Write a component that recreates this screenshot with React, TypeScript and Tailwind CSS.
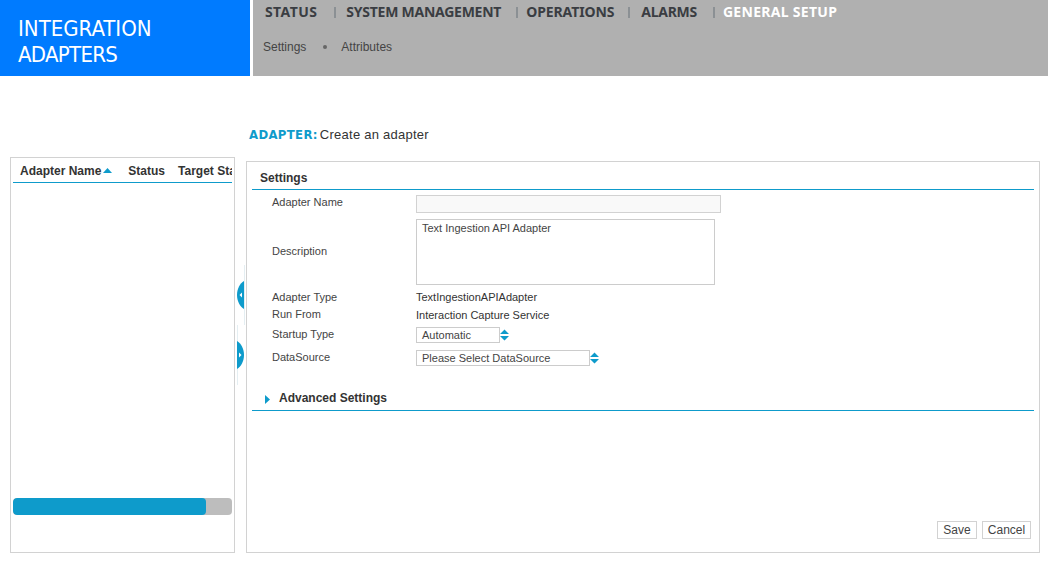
import React from "react";

const teal = "#0e9bcb";

function Spinner() {
  return (
    <svg width="9" height="12" viewBox="0 0 9 12" className="shrink-0">
      <path d="M4.5 0.5 L9 5 H0 Z M0 7 H9 L4.5 11.5 Z" fill="#0e9bcb" />
    </svg>
  );
}

function Handle({ dir, className }: { dir: "l" | "r"; className: string }) {
  return (
    <div className={`absolute w-[8px] flex ${className}`}>
      <svg width="8" height="28" viewBox="0 0 8 28">
        <path
          d={dir === "l" ? "M7 0 C 3 2 0 8 0 14 C 0 20 3 26 7 28 Z" : "M1 0 C 5 2 8 8 8 14 C 8 20 5 26 1 28 Z"}
          fill="#0e9bcb"
        />
        <path d={dir === "l" ? "M5 11.5 L2.5 14 L5 16.5 Z" : "M3 11.5 L5.5 14 L3 16.5 Z"} fill="#ffffff" />
      </svg>
    </div>
  );
}

function Row({ label, h, children, className = "", labelClass = "" }: { label: string; h: string; children?: React.ReactNode; className?: string; labelClass?: string }) {
  return (
    <div className={`flex items-center ${h} ${className}`}>
      <div className={`w-[164px] shrink-0 pl-[20px] ${labelClass}`}>{label}</div>
      {children}
    </div>
  );
}

export default function App() {
  const nav = [
    { t: "STATUS", cls: "ml-[12px] text-[#3a3d42] tracking-[0.4px]", sep: "" },
    { t: "SYSTEM MANAGEMENT", cls: "text-[#3a3d42] tracking-[-0.25px]", sep: "ml-[17px] mr-[10px]" },
    { t: "OPERATIONS", cls: "text-[#3a3d42] tracking-[-0.1px]", sep: "ml-[15px] mr-[8px]" },
    { t: "ALARMS", cls: "text-[#3a3d42] tracking-[-0.3px]", sep: "ml-[14px] mr-[11px]" },
    { t: "GENERAL SETUP", cls: "text-white tracking-[0.3px]", sep: "ml-[16px] mr-[8px]" },
  ];
  return (
    <div className="w-[1048px] h-[562px] bg-white overflow-hidden relative text-[11px] text-[#444444] font-['Liberation_Sans',Arial,sans-serif]">
      <header className="flex h-[76px]">
        <div className="w-[250px] bg-[#007bff] text-white text-[22px] leading-[26px] pl-[18px] pt-[16px] font-['DejaVu_Sans_Condensed','DejaVu_Sans',sans-serif]">
          <div>INTEGRATION</div>
          <div className="tracking-[-0.7px]">ADAPTERS</div>
        </div>
        <div className="ml-[3px] flex-1 bg-[#b0b0b0]">
          <nav className="flex items-center h-[23px] text-[14px] font-bold font-['Noto_Sans',sans-serif]">
            {nav.map((n) => (
              <React.Fragment key={n.t}>
                {n.sep && <span className={`w-[2px] h-[11px] mt-[2px] bg-[#8b9094] ${n.sep}`} />}
                <span className={n.cls}>{n.t}</span>
              </React.Fragment>
            ))}
          </nav>
          <div className="flex items-center mt-[16px] h-[16px] pl-[10px] text-[12px] text-[#444444]">
            <span>Settings</span>
            <span className="mr-[14px] ml-[17px] w-[4px] h-[4px] rounded-full bg-[#666666]" />
            <span>Attributes</span>
          </div>
        </div>
      </header>

      <div className="h-[18px] mt-[50px] pl-[249px] flex items-center text-[13px] tracking-[0.35px] font-['DejaVu_Sans_Condensed','Liberation_Sans',sans-serif]">
        <span className="font-bold text-[#0e9bcb] mr-[2px]">ADAPTER:</span>
        <span className="text-[#333333] font-['Liberation_Sans',sans-serif] tracking-[0.25px]">Create an adapter</span>
      </div>

      <main className="flex items-end pl-[10px] mt-[13px] h-[396px]">
        <section className="w-[225px] h-[396px] border border-[#d2d2d2] px-[2px] flex flex-col">
          <div className="h-[25px] shrink-0 border-b border-[#0e9bcb] flex items-center overflow-hidden whitespace-nowrap text-[12px] font-bold text-[#333333] pl-[7px] pt-[1px]">
            <span className="shrink-0">Adapter Name</span>
            <svg width="9" height="5" viewBox="0 0 9 5" className="shrink-0 ml-[2px] mr-[16px]"><path d="M4.5 0 L9 5 H0 Z" fill={teal} /></svg>
            <span className="shrink-0 mr-[13px]">Status</span>
            <span className="shrink-0">Target Status</span>
          </div>
          <div className="mt-[315px] h-[17px] rounded-[4px] bg-[#bdbdbd] overflow-hidden">
            <div className="w-[193px] h-full rounded-[4px] bg-[#0e9bcb]" />
          </div>
        </section>

        <section className="ml-[11px] w-[794px] h-[392px] border border-[#d2d2d2] px-[5px] flex flex-col">
          <div className="h-[28px] border-b border-[#0e9bcb] text-[12px] font-bold text-[#333333] pl-[8px] flex items-center pt-[5px]">Settings</div>
          <div className="flex flex-col pt-[5px]">
            <Row label="Adapter Name" h="h-[18px]" labelClass="-mt-[4px]">
              <div className="w-[305px] h-[18px] border border-[#d2d2d2] bg-[#f9f9f9]" />
            </Row>
            <Row label="Description" h="h-[66px]" className="mt-[6px]" labelClass="-mt-[1px]">
              <div className="w-[299px] h-[66px] border border-[#cccccc] px-[5px] pt-[1px] leading-[15px]">Text Ingestion API Adapter</div>
            </Row>
            <Row label="Adapter Type" h="h-[16px]" className="mt-[4px]">
              <div className="text-[#333333]">TextIngestionAPIAdapter</div>
            </Row>
            <Row label="Run From" h="h-[16px]" className="mt-[2px]" labelClass="-mt-[1px]">
              <div className="text-[#333333]">Interaction Capture Service</div>
            </Row>
            <Row label="Startup Type" h="h-[16px]" className="mt-[4px]" labelClass="-mt-[1px]">
              <div className="w-[84px] h-[16px] border border-[#cccccc] pl-[5px] leading-[14px]">Automatic</div>
              <Spinner />
            </Row>
            <Row label="DataSource" h="h-[16px]" className="mt-[7px]" labelClass="-mt-[1px]">
              <div className="w-[174px] h-[16px] border border-[#cccccc] pl-[5px] leading-[14px]">Please Select DataSource</div>
              <Spinner />
            </Row>
          </div>
          <div className="mt-[23px] h-[22px] border-b border-[#0e9bcb] flex items-center pb-[3px] text-[12px] font-bold text-[#333333]">
            <svg width="5" height="9" viewBox="0 0 5 9" className="ml-[13px] mr-[9px] mt-[3px]"><path d="M0 0 L5 4.5 L0 9 Z" fill={teal} /></svg>
            Advanced Settings
          </div>
          <div className="mt-auto mb-[13px] flex justify-end gap-[5px] pr-[3px]">
            <button className="w-[40px] h-[18px] border border-[#d2d2d2] text-[12px] text-[#444444] leading-none">Save</button>
            <button className="w-[49px] h-[18px] border border-[#d2d2d2] text-[12px] text-[#444444] leading-none">Cancel</button>
          </div>
        </section>
      </main>

      <div className="absolute left-[244px] top-[265px] w-[1px] h-[60px] bg-[#e4eef2]" />
      <div className="absolute left-[237px] top-[325px] w-[1px] h-[60px] bg-[#e4eef2]" />
      <Handle dir="l" className="left-[237px] top-[281px]" />
      <Handle dir="r" className="left-[236px] top-[341px]" />
    </div>
  );
}
